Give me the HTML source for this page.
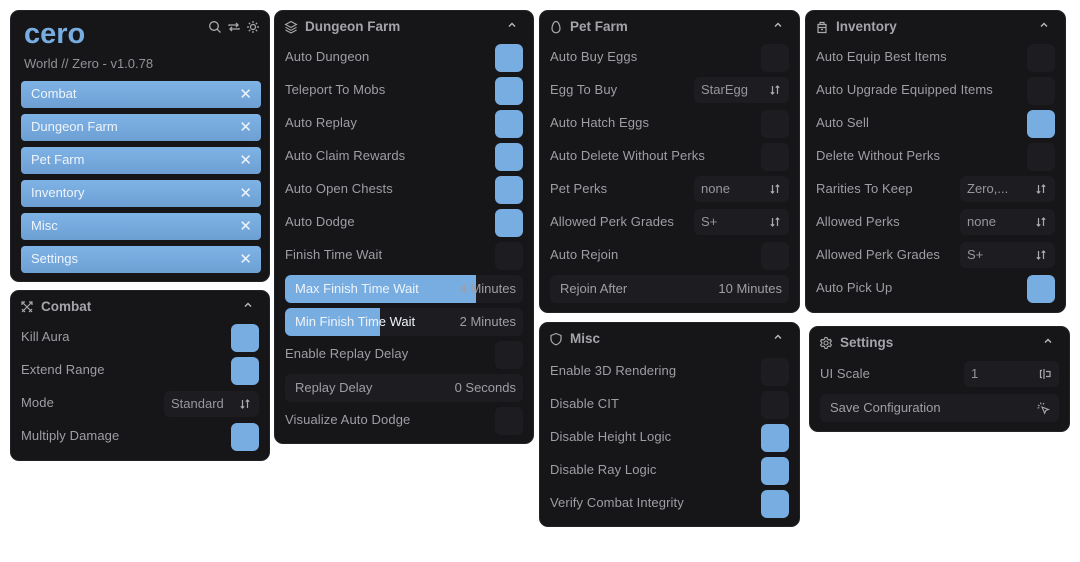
<!DOCTYPE html>
<html><head><meta charset="utf-8"><style>
*{box-sizing:border-box;margin:0;padding:0}
body{width:1080px;height:562px;background:#fff;position:relative;overflow:hidden;font-family:"Liberation Sans",sans-serif;}
.p{position:absolute;background:#161619;border-radius:9px;border:1px solid #232327;}
.h{position:absolute;left:30px;top:8px;font-size:13.5px;font-weight:bold;color:#a4a4aa;}
.hi{position:absolute;left:9px;top:9px;width:14px;height:14px}
.ch{position:absolute;right:16px;top:9px;width:10px;height:10px}
.r{position:absolute;left:10px;font-size:13px;color:#9e9ea4;line-height:16px;letter-spacing:0.1px}
.t{position:absolute;right:10px;width:28px;height:28px;border-radius:6px;background:#1d1d21}
.t.on{background:#78ade2}
.d{position:absolute;right:10px;width:95px;height:26px;border-radius:6px;background:#1d1d21;color:#96969c;font-size:13px;padding:5px 0 0 7px}
.d svg{position:absolute;right:8px;top:7px}
.s{position:absolute;left:10px;right:10px;height:28px;border-radius:6px;background:#1d1d21;color:#9e9ea4;font-size:13px}
.s .f{position:absolute;left:0;top:0;bottom:0;background:#78ade2;border-radius:6px 0 0 6px}
.s .a{position:absolute;left:10px;top:6px;color:#eef3fa}
.s .b{position:absolute;right:7px;top:6px}
.n{position:absolute;left:10px;width:240px;height:27px;border-radius:4px;background:linear-gradient(#7fb3e6,#6d9fd3);color:#eef4fb;font-size:13px;padding:5px 0 0 10px}
.n span{position:absolute;right:9px;top:4px;font-size:15px}
</style></head><body>
<svg width="0" height="0" style="position:absolute"><defs>
<symbol id="chev" viewBox="0 0 10 10"><path d="M2 6.5L5 3.5L8 6.5" stroke="#bbb" stroke-width="1.4" fill="none"/></symbol>
<symbol id="ud" viewBox="0 0 12 12"><path d="M3.5 2v8M1.8 8.3L3.5 10L5.2 8.3M8.5 10V2M6.8 3.7L8.5 2L10.2 3.7" stroke="#aaa" stroke-width="1.2" fill="none"/></symbol>
</defs></svg>

<!-- Main -->
<div class="p" style="left:10px;top:10px;width:260px;height:272px">
<div style="position:absolute;left:13px;top:7px;font-size:29px;font-weight:bold;color:#78ade2">cero</div>
<div style="position:absolute;left:13px;top:45px;font-size:13px;color:#929298">World // Zero - v1.0.78</div>
<svg style="position:absolute;left:197px;top:9px" width="14" height="14" viewBox="0 0 14 14"><circle cx="6" cy="6" r="4.3" stroke="#aaa" stroke-width="1.3" fill="none"/><path d="M9.3 9.3L12.5 12.5" stroke="#aaa" stroke-width="1.3"/></svg>
<svg style="position:absolute;left:216px;top:9px" width="14" height="14" viewBox="0 0 14 14"><path d="M2 6V5h9M9 3l2 2-2 2M12 8v1H3M5 11L3 9l2-2" stroke="#aaa" stroke-width="1.3" fill="none"/></svg>
<svg style="position:absolute;left:235px;top:9px" width="14" height="14" viewBox="0 0 14 14"><circle cx="7" cy="7" r="2.5" stroke="#aaa" stroke-width="1.2" fill="none"/><path d="M7 1v2M7 11v2M1 7h2M11 7h2M2.8 2.8l1.4 1.4M9.8 9.8l1.4 1.4M2.8 11.2l1.4-1.4M9.8 4.2l1.4-1.4" stroke="#aaa" stroke-width="1.2"/></svg>
<div class="n" style="top:70px">Combat<span>✕</span></div>
<div class="n" style="top:103px">Dungeon Farm<span>✕</span></div>
<div class="n" style="top:136px">Pet Farm<span>✕</span></div>
<div class="n" style="top:169px">Inventory<span>✕</span></div>
<div class="n" style="top:202px">Misc<span>✕</span></div>
<div class="n" style="top:235px">Settings<span>✕</span></div>
</div>

<!-- Combat -->
<div class="p" style="left:10px;top:290px;width:260px;height:171px">
<svg class="hi" viewBox="0 0 14 14"><path d="M2 2l10 10M12 2L2 12M2 9l3 3M9 12l3-3M2 5V2h3M12 5V2H9" stroke="#aaa" stroke-width="1.2" fill="none"/></svg>
<div class="h">Combat</div><svg class="ch"><use href="#chev"/></svg>
<div class="r" style="top:38px">Kill Aura</div><div class="t on" style="top:33px"></div>
<div class="r" style="top:71px">Extend Range</div><div class="t on" style="top:66px"></div>
<div class="r" style="top:104px">Mode</div><div class="d" style="top:100px">Standard<svg width="12" height="12"><use href="#ud"/></svg></div>
<div class="r" style="top:137px">Multiply Damage</div><div class="t on" style="top:132px"></div>
</div>

<!-- Dungeon -->
<div class="p" style="left:274px;top:10px;width:260px;height:434px">
<svg class="hi" viewBox="0 0 14 14"><path d="M7 1.5L12.5 4.5L7 7.5L1.5 4.5Z M1.5 7.3L7 10.3L12.5 7.3M1.5 10L7 13L12.5 10" stroke="#aaa" stroke-width="1.1" fill="none"/></svg>
<div class="h">Dungeon Farm</div><svg class="ch"><use href="#chev"/></svg>
<div class="r" style="top:38px">Auto Dungeon</div><div class="t on" style="top:33px"></div>
<div class="r" style="top:71px">Teleport To Mobs</div><div class="t on" style="top:66px"></div>
<div class="r" style="top:104px">Auto Replay</div><div class="t on" style="top:99px"></div>
<div class="r" style="top:137px">Auto Claim Rewards</div><div class="t on" style="top:132px"></div>
<div class="r" style="top:170px">Auto Open Chests</div><div class="t on" style="top:165px"></div>
<div class="r" style="top:203px">Auto Dodge</div><div class="t on" style="top:198px"></div>
<div class="r" style="top:236px">Finish Time Wait</div><div class="t" style="top:231px"></div>
<div class="s" style="top:264px"><div class="f" style="width:191px"></div><div class="a">Max Finish Time Wait</div><div class="b">4 Minutes</div></div>
<div class="s" style="top:297px"><div class="f" style="width:95px"></div><div class="a">Min Finish Time Wait</div><div class="b">2 Minutes</div></div>
<div class="r" style="top:335px">Enable Replay Delay</div><div class="t" style="top:330px"></div>
<div class="s" style="top:363px"><div class="a" style="color:#9e9ea4">Replay Delay</div><div class="b">0 Seconds</div></div>
<div class="r" style="top:401px">Visualize Auto Dodge</div><div class="t" style="top:396px"></div>
</div>

<!-- Pet -->
<div class="p" style="left:539px;top:10px;width:261px;height:303px">
<svg class="hi" viewBox="0 0 14 14"><path d="M7 1.5C4.5 1.5 3 6 3 8.5C3 11 4.8 12.8 7 12.8C9.2 12.8 11 11 11 8.5C11 6 9.5 1.5 7 1.5Z" stroke="#aaa" stroke-width="1.2" fill="none"/></svg>
<div class="h">Pet Farm</div><svg class="ch"><use href="#chev"/></svg>
<div class="r" style="top:38px">Auto Buy Eggs</div><div class="t" style="top:33px"></div>
<div class="r" style="top:71px">Egg To Buy</div><div class="d" style="top:66px">StarEgg<svg width="12" height="12"><use href="#ud"/></svg></div>
<div class="r" style="top:104px">Auto Hatch Eggs</div><div class="t" style="top:99px"></div>
<div class="r" style="top:137px">Auto Delete Without Perks</div><div class="t" style="top:132px"></div>
<div class="r" style="top:170px">Pet Perks</div><div class="d" style="top:165px">none<svg width="12" height="12"><use href="#ud"/></svg></div>
<div class="r" style="top:203px">Allowed Perk Grades</div><div class="d" style="top:198px">S+<svg width="12" height="12"><use href="#ud"/></svg></div>
<div class="r" style="top:236px">Auto Rejoin</div><div class="t" style="top:231px"></div>
<div class="s" style="top:264px"><div class="a" style="color:#9e9ea4">Rejoin After</div><div class="b">10 Minutes</div></div>
</div>

<!-- Misc -->
<div class="p" style="left:539px;top:322px;width:261px;height:205px">
<svg class="hi" viewBox="0 0 14 14"><path d="M7 1.5L12 3.5V7C12 10 9.5 12 7 12.8C4.5 12 2 10 2 7V3.5Z" stroke="#aaa" stroke-width="1.2" fill="none"/></svg>
<div class="h">Misc</div><svg class="ch"><use href="#chev"/></svg>
<div class="r" style="top:40px">Enable 3D Rendering</div><div class="t" style="top:35px"></div>
<div class="r" style="top:73px">Disable CIT</div><div class="t" style="top:68px"></div>
<div class="r" style="top:106px">Disable Height Logic</div><div class="t on" style="top:101px"></div>
<div class="r" style="top:139px">Disable Ray Logic</div><div class="t on" style="top:134px"></div>
<div class="r" style="top:172px">Verify Combat Integrity</div><div class="t on" style="top:167px"></div>
</div>

<!-- Inventory -->
<div class="p" style="left:805px;top:10px;width:261px;height:303px">
<svg class="hi" viewBox="0 0 14 14"><path d="M3 4.5h8v8H3Z M5 4.5V2.5h4v2M3 7.5h8M6 9.5h2" stroke="#aaa" stroke-width="1.2" fill="none"/></svg>
<div class="h">Inventory</div><svg class="ch"><use href="#chev"/></svg>
<div class="r" style="top:38px">Auto Equip Best Items</div><div class="t" style="top:33px"></div>
<div class="r" style="top:71px">Auto Upgrade Equipped Items</div><div class="t" style="top:66px"></div>
<div class="r" style="top:104px">Auto Sell</div><div class="t on" style="top:99px"></div>
<div class="r" style="top:137px">Delete Without Perks</div><div class="t" style="top:132px"></div>
<div class="r" style="top:170px">Rarities To Keep</div><div class="d" style="top:165px">Zero,...<svg width="12" height="12"><use href="#ud"/></svg></div>
<div class="r" style="top:203px">Allowed Perks</div><div class="d" style="top:198px">none<svg width="12" height="12"><use href="#ud"/></svg></div>
<div class="r" style="top:236px">Allowed Perk Grades</div><div class="d" style="top:231px">S+<svg width="12" height="12"><use href="#ud"/></svg></div>
<div class="r" style="top:269px">Auto Pick Up</div><div class="t on" style="top:264px"></div>
</div>

<!-- Settings -->
<div class="p" style="left:809px;top:326px;width:261px;height:106px">
<svg class="hi" viewBox="0 0 14 14"><circle cx="7" cy="7" r="2" stroke="#aaa" stroke-width="1.1" fill="none"/><path d="M6 1.5h2l.4 1.6 1.4.8 1.6-.5 1 1.7-1.2 1.2v1.4l1.2 1.2-1 1.7-1.6-.5-1.4.8L8 12.5H6l-.4-1.6-1.4-.8-1.6.5-1-1.7 1.2-1.2V6.3L1.6 5.1l1-1.7 1.6.5 1.4-.8Z" stroke="#aaa" stroke-width="1.1" fill="none"/></svg>
<div class="h">Settings</div><svg class="ch"><use href="#chev"/></svg>
<div class="r" style="top:39px">UI Scale</div>
<div class="d" style="top:34px;width:95px">1<svg width="14" height="12" viewBox="0 0 14 12" style="right:7px"><path d="M4 2.5H2.5v7H4M6 1v10M8 3.5h4v5H8" stroke="#aaa" stroke-width="1.2" fill="none"/></svg></div>
<div class="s" style="top:67px"><div class="a" style="color:#9e9ea4">Save Configuration</div>
<svg style="position:absolute;right:9px;top:7px" width="14" height="14" viewBox="0 0 14 14"><path d="M6 6l6.5 2.5-2.8 1-1 2.8Z M2 4l1.5 1M4.5 1.5l.5 1.8M1.5 7l1.8-.3M8 2l-1 1.5" stroke="#aaa" stroke-width="1.1" fill="none"/></svg></div>
</div>
</body></html>
